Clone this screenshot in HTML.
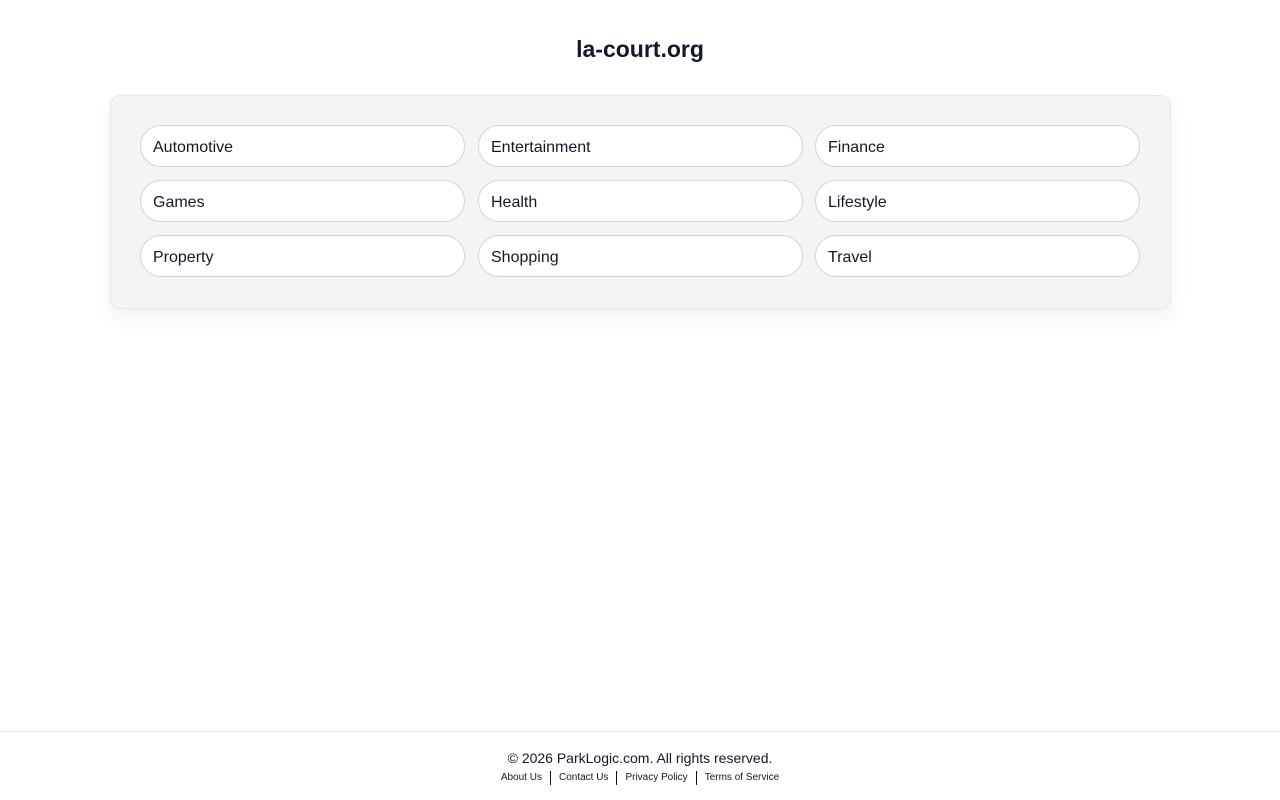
<!DOCTYPE html>
<html><head><meta charset="utf-8"><style>
body{margin:0;background:#fff;font-family:"Liberation Sans",sans-serif;color:#111827;width:1280px;height:800px;position:relative;overflow:hidden}
h1{position:absolute;top:34px;left:0;width:1280px;text-align:center;margin:0;font-size:23px;font-weight:bold;line-height:30px}
.card{position:absolute;left:110px;top:95px;width:1059px;height:212px;background:#f3f4f6;border:1px solid #e5e7eb;border-radius:10px;box-shadow:0 8px 20px rgba(0,0,0,0.06)}
.pill{position:absolute;height:40px;background:#fff;border:1px solid #d1d5db;border-radius:21px;box-sizing:content-box;font-size:16px;line-height:44px;padding-left:12px;width:311px;overflow:hidden}
.foot{position:absolute;top:731px;left:0;width:1280px;border-top:1px solid #e5e7eb;text-align:center}
.c{margin-top:17px;font-size:14px;line-height:18px}
.l{font-size:10px;line-height:14px;margin-top:4px}
.l span{display:inline-block;padding:0 8px;border-left:1px solid #111}
.l span:first-child{border-left:none}
</style></head><body>
<h1>la-court.org</h1>
<div class="card">
<div class="pill" style="left:29px;top:29px">Automotive</div>
<div class="pill" style="left:367px;top:29px">Entertainment</div>
<div class="pill" style="left:704px;top:29px">Finance</div>
<div class="pill" style="left:29px;top:84px">Games</div>
<div class="pill" style="left:367px;top:84px">Health</div>
<div class="pill" style="left:704px;top:84px">Lifestyle</div>
<div class="pill" style="left:29px;top:139px">Property</div>
<div class="pill" style="left:367px;top:139px">Shopping</div>
<div class="pill" style="left:704px;top:139px">Travel</div>
</div>
<div class="foot"><div class="c">© 2026 ParkLogic.com. All rights reserved.</div>
<div class="l"><span>About Us</span><span>Contact Us</span><span>Privacy Policy</span><span>Terms of Service</span></div></div>
</body></html>
